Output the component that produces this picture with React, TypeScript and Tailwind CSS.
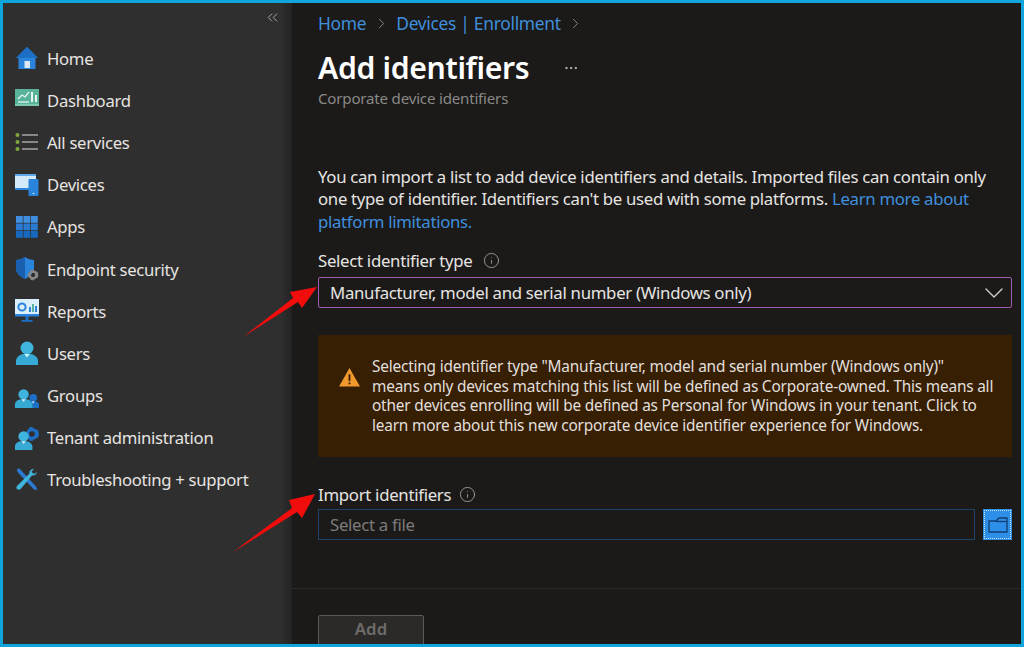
import { ChevronDown, ChevronRight, ChevronsLeft, Info, MoreHorizontal } from "lucide-react";
import type { ReactNode } from "react";

const HomeIcon = () => (
  <svg viewBox="0 0 24 24" className="h-6 w-6">
    <path d="M12 1 L23 12 L20.5 12 L20.5 23 L3.5 23 L3.5 12 L1 12 Z" fill="#2b84dc" />
    <path d="M12 1 L23 12 L1 12 Z" fill="#1c6fc4" />
    <rect x="9.5" y="15" width="5.5" height="7" fill="#dbe9f6" />
  </svg>
);

const DashboardIcon = () => (
  <svg viewBox="0 0 24 24" className="h-6 w-6">
    <rect x="0" y="1" width="24" height="17" fill="#58b39a" />
    <rect x="0" y="16" width="24" height="2" fill="#7cc8b2" />
    <path d="M3 11 L7 7 L10 9 L14 4" stroke="#e6f5f0" strokeWidth="1.3" fill="none" />
    <path d="M3 14 H14" stroke="#e6f5f0" strokeWidth="1.3" />
    <rect x="16" y="4" width="2" height="10" fill="#e6f5f0" />
    <rect x="20" y="7" width="2" height="7" fill="#e6f5f0" />
  </svg>
);

const ServicesIcon = () => (
  <svg viewBox="0 0 24 24" className="h-6 w-6">
    {[5, 12, 19].map((y) => (
      <g key={y}>
        <circle cx="2.5" cy={y} r="2" fill="#7fa83c" />
        <rect x="7" y={y - 1} width="16" height="2" fill="#8a8886" />
      </g>
    ))}
  </svg>
);

const DevicesIcon = () => (
  <svg viewBox="0 0 24 24" className="h-6 w-6">
    <rect x="0" y="1" width="21" height="15" fill="#d3eafb" />
    <rect x="0" y="15" width="14" height="2" fill="#2b84dc" />
    <path d="M0 1 H21 V3 H0 Z" fill="#5ea9ec" />
    <rect x="13.5" y="6" width="10" height="17" rx="1" fill="#2b84dc" />
    <circle cx="18.5" cy="20.5" r="0.8" fill="#dbe9f6" />
  </svg>
);

const AppsIcon = () => (
  <svg viewBox="0 0 24 24" className="h-6 w-6">
    {[1, 8.5, 16].map((y, r) =>
      [1, 8.5, 16].map((x) => (
        <rect key={`${x}-${y}`} x={x} y={y} width="6.8" height="6.8" fill={["#3f8ee0", "#2a7ad2", "#1868bf"][r]} />
      ))
    )}
  </svg>
);

const Gear = ({ x, y, r, color }: { x: number; y: number; r: number; color: string }) => (
  <g>
    <circle cx={x} cy={y} r={r * 0.68} fill="none" stroke={color} strokeWidth={r * 0.5} />
    <circle cx={x} cy={y} r={r * 0.92} fill="none" stroke={color} strokeWidth={r * 0.3} strokeDasharray={`${r * 0.62} ${r * 0.62}`} />
  </g>
);

const SecurityIcon = () => (
  <svg viewBox="0 0 24 24" className="h-6 w-6">
    <path d="M10 0 C13 2 16 3 19 3 V11 C19 16 15 19.5 10 22 C5 19.5 1 16 1 11 V3 C4 3 7 2 10 0 Z" fill="#2b84dc" />
    <path d="M10 0 C7 2 4 3 1 3 V11 C1 16 5 19.5 10 22 Z" fill="#185fb0" />
    <Gear x={18} y={18} r={5} color="#8a8886" />
  </svg>
);

const ReportsIcon = () => (
  <svg viewBox="0 0 24 24" className="h-6 w-6">
    <rect x="0" y="0" width="24" height="17" fill="#dbeefb" />
    <rect x="0" y="15" width="24" height="2.5" fill="#2b84dc" />
    <circle cx="7" cy="8" r="3.6" fill="none" stroke="#2b84dc" strokeWidth="2" />
    <rect x="14" y="8" width="2" height="5" fill="#2b84dc" />
    <rect x="17" y="5" width="2" height="8" fill="#58b39a" />
    <rect x="20" y="7" width="2" height="6" fill="#2b84dc" />
    <rect x="10.5" y="17" width="3" height="4" fill="#1c6fc4" />
    <rect x="6.5" y="21" width="11" height="1.8" fill="#1c6fc4" />
  </svg>
);

const Person = ({ dx, scale, head, body }: { dx: number; scale: number; head: string; body: string }) => (
  <g transform={`translate(${dx} ${24 - 24 * scale}) scale(${scale})`}>
    <circle cx="12" cy="7" r="6.5" fill={head} />
    <path d="M1 24 V20 C1 16 5 13.5 8 13 H16 C19 13.5 23 16 23 20 V24 Z" fill={body} />
    <path d="M9.5 13 H14.5 L12 16.5 Z" fill="#d6f1fa" />
  </g>
);

const UsersIcon = () => (
  <svg viewBox="0 0 24 24" className="h-6 w-6">
    <Person dx={0} scale={1} head="#3fb4dc" body="#36aad4" />
  </svg>
);

const GroupsIcon = () => (
  <svg viewBox="0 0 24 24" className="h-6 w-6">
    <Person dx={11} scale={0.6} head="#1c6fc4" body="#1c6fc4" />
    <Person dx={-1} scale={0.8} head="#3fb4dc" body="#36aad4" />
  </svg>
);

const TenantIcon = () => (
  <svg viewBox="0 0 24 24" className="h-6 w-6">
    <Gear x={17} y={8} r={6.5} color="#1c6fc4" />
    <Person dx={-1} scale={0.8} head="#3fb4dc" body="#36aad4" />
  </svg>
);

// wrench over screwdriver
const ToolsIcon = () => (
  <svg viewBox="0 0 24 24" className="h-6 w-6">
    <path d="M2 1 L4.5 0.5 L21 18.5 L22.5 22 L19 21.5 L2.5 4 Z" fill="#2a7ad2" />
    <path d="M22 3.5 C22 6.5 19.5 8 17 7.5 L6.5 20 C5 22.5 2 22 1.5 20 C1 18.5 2.5 17.5 3.5 16.5 L14.5 5.5 C14 3 16 1 19 1 L16.5 3.5 L18 5.5 L20.5 5.5 Z" fill="#3fb4dc" />
  </svg>
);

const navItems: { label: string; icon: ReactNode }[] = [
  { label: "Home", icon: <HomeIcon /> },
  { label: "Dashboard", icon: <DashboardIcon /> },
  { label: "All services", icon: <ServicesIcon /> },
  { label: "Devices", icon: <DevicesIcon /> },
  { label: "Apps", icon: <AppsIcon /> },
  { label: "Endpoint security", icon: <SecurityIcon /> },
  { label: "Reports", icon: <ReportsIcon /> },
  { label: "Users", icon: <UsersIcon /> },
  { label: "Groups", icon: <GroupsIcon /> },
  { label: "Tenant administration", icon: <TenantIcon /> },
  { label: "Troubleshooting + support", icon: <ToolsIcon /> },
];

const FolderIcon = () => (
  <svg viewBox="0 0 20 16" className="h-[16px] w-[20px]" fill="none" stroke="#123f73" strokeWidth="1.3">
    <path d="M1 4 H8 L11 1 H19 V15 H1 Z" />
    <path d="M8 4.5 H19" />
  </svg>
);

export default function App() {
  return (
    <div className="relative h-[647px] w-[1024px] overflow-hidden border-[3px] border-[#10a5dc] bg-[#1b1a19] font-['Noto_Sans',sans-serif] text-[#e6e4e1]">
      <div className="flex h-full">
        <aside className="flex w-[289px] shrink-0 flex-col bg-[#302f2f]">
          <div className="flex h-[34px] items-start justify-end pr-[11px] pt-[6px]">
            <ChevronsLeft className="h-[17px] w-[17px] text-[#a8a6a4]" strokeWidth={1.4} />
          </div>
          <nav className="flex flex-col pl-[12px]">
            {navItems.map((item) => (
              <div key={item.label} className="flex h-[42.2px] items-center gap-[8px] text-[16.7px] tracking-[-0.3px]">
                {item.icon}
                <span>{item.label}</span>
              </div>
            ))}
          </nav>
        </aside>
        <main className="flex min-w-0 flex-1 flex-col pl-[26px] pr-[9px]">
          <div className="flex h-[36px] shrink-0 items-center gap-[6.5px] pt-[5px] text-[17.4px] tracking-[-0.3px] text-[#3f8fdc]">
            <span>Home</span>
            <ChevronRight className="h-[17px] w-[17px] text-[#8f8d8b]" strokeWidth={1.3} />
            <span>Devices | Enrollment</span>
            <ChevronRight className="h-[17px] w-[17px] text-[#8f8d8b]" strokeWidth={1.3} />
          </div>
          <div className="mt-[5px] flex h-[48px] shrink-0 items-center">
            <h1 className="text-[30.2px] font-semibold tracking-[-0.35px] text-white">Add identifiers</h1>
            <MoreHorizontal className="ml-[34px] h-[16px] w-[16px] text-[#c8c6c4]" strokeWidth={1.5} />
          </div>
          <div className="mt-[-5px] shrink-0 text-[15.1px] tracking-[-0.2px] text-[#8a8886]">Corporate device identifiers</div>
          <p className="mt-[56px] w-[690px] shrink-0 text-[16.75px] leading-[22.6px] tracking-[-0.3px]">
            You can import a list to add device identifiers and details. Imported files can contain only one type of
            identifier. Identifiers can't be used with some platforms.{" "}
            <span className="text-[#3f8fdc]">Learn more about platform limitations.</span>
          </p>
          <div className="mt-[15px] flex h-[24px] shrink-0 items-center gap-[11px] text-[16.8px] tracking-[-0.3px]">
            <span>Select identifier type</span>
            <Info className="h-[17px] w-[17px] text-[#a8a6a4]" strokeWidth={1.2} />
          </div>
          <div className="mt-[5px] flex h-[31px] shrink-0 items-center justify-between rounded-[2px] border border-[#a05cb0] pl-[11px] pr-px text-[16.8px] tracking-[-0.3px]">
            <span>Manufacturer, model and serial number (Windows only)</span>
            <ChevronDown className="-my-px h-[32px] w-[32px] text-[#d0cecc]" strokeWidth={1} />
          </div>
          <div className="mt-[27px] flex h-[122px] shrink-0 items-center gap-[11px] bg-[#371f03] pl-[20px] pr-[14px]">
            <svg viewBox="0 0 24 22" className="mb-[39px] h-[20px] w-[23px] shrink-0">
              <path d="M12 1 L23.5 21.5 H0.5 Z" fill="#f2992e" />
              <rect x="11" y="8" width="2" height="7.5" fill="#371f03" />
              <rect x="11" y="17" width="2" height="2" fill="#371f03" />
            </svg>
            <p className="whitespace-nowrap text-[15.4px] leading-[19.6px] tracking-[-0.2px] text-[#e1dfdd]">
              Selecting identifier type "Manufacturer, model and serial number (Windows only)"
              <br />
              means only devices matching this list will be defined as Corporate-owned. This means all
              <br />
              other devices enrolling will be defined as Personal for Windows in your tenant. Click to
              <br />
              learn more about this new corporate device identifier experience for Windows.
            </p>
          </div>
          <div className="mt-[25px] flex h-[24px] shrink-0 items-center gap-[8px] text-[16.8px] tracking-[-0.3px]">
            <span>Import identifiers</span>
            <Info className="h-[17px] w-[17px] text-[#a8a6a4]" strokeWidth={1.2} />
          </div>
          <div className="mt-[3px] flex shrink-0 gap-[8px]">
            <div className="flex h-[31px] flex-1 items-center border border-[#1d4468] pl-[11px] text-[16.8px] tracking-[-0.3px] text-[#7d7b79]">
              Select a file
            </div>
            <div className="flex h-[31px] w-[29px] items-center justify-center bg-[#2e8fe8] outline-1 -outline-offset-2 outline-dotted outline-[#cfe6fb]">
              <FolderIcon />
            </div>
          </div>
          <div className="mt-[48px] -ml-[26px] -mr-[9px] h-px shrink-0 bg-[#2b2a29]" />
          <div className="mt-[26px] flex h-[34px] w-[106px] shrink-0 items-center justify-center rounded-[2px] border border-[#5c5a58] bg-[#2b2a29] pb-[8px] text-[16.8px] font-semibold text-[#6e6c6a]">
            Add
          </div>
        </main>
      </div>
      <div className="pointer-events-none absolute left-[277px] top-0 h-full w-[12px] bg-gradient-to-r from-transparent to-[#00000040]" />
      <svg viewBox="0 0 80 56" className="absolute left-[237px] top-[281px] h-[56px] w-[80px]">
        <path d="M3 53 L53 14 L50 8 L77 3 L62 24 L58 18 Z" fill="#f20d0d" />
      </svg>
      <svg viewBox="0 0 90 65" className="absolute left-[227px] top-[487px] h-[65px] w-[90px]">
        <path d="M3 62 L62 18 L59 10 L85 4 L72 28 L67 22 Z" fill="#f20d0d" />
      </svg>
    </div>
  );
}
